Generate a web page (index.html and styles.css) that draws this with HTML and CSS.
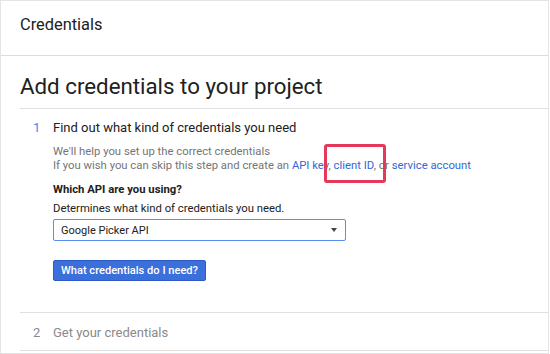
FILE: index.html
```html
<!DOCTYPE html>
<html lang="en">
<head>
    <meta charset="UTF-8">
    <meta name="viewport" content="width=device-width, initial-scale=1.0">
    <title>Credentials</title>
    <link rel="stylesheet" href="styles.css">
</head>
<body>
    <div class="page">
        <header class="topbar">
            <h1>Credentials</h1>
        </header>
        <main class="content">
            <h2 class="title">Add credentials to your project</h2>

            <section class="step step-active">
                <div class="step-num">1</div>
                <div class="step-body">
                    <h3>Find out what kind of credentials you need</h3>
                    <p class="muted">We'll help you set up the correct credentials<br>
                        If you wish you can skip this step and create an <a href="#">API key</a>, <a href="#">client ID</a>, or <a href="#">service account</a></p>
                    <label for="api">Which API are you using?</label>
                    <p class="hint">Determines what kind of credentials you need.</p>
                    <div class="select" id="api">
                        <span>Google Picker API</span>
                        <span class="caret"></span>
                    </div>
                    <button type="button">What credentials do I need?</button>
                </div>
            </section>

            <section class="step step-next">
                <div class="step-num">2</div>
                <div class="step-body">
                    <h3>Get your credentials</h3>
                </div>
            </section>
        </main>
        <span class="highlight"></span>
    </div>
</body>
</html>
```

FILE: styles.css
```css
body {
    margin: 0;
    font-family: Roboto, "Liberation Sans", Arial, sans-serif;
    color: #212121;
    background: #fff;
}
.page {
    position: relative;
    width: 549px;
    height: 354px;
    box-sizing: border-box;
    border: 1px solid #e4e4e4;
    overflow: hidden;
}
.topbar {
    height: 55px;
    box-sizing: border-box;
    padding: 14px 19px 0;
    border-bottom: 1px solid #dcdcdc;
}
.topbar h1 {
    margin: 0;
    font-size: 16.4px;
    line-height: 20px;
    font-weight: 400;
}
.content {
    padding: 16px 0 0 19px;
}
.title {
    margin: 0;
    padding-bottom: 8px;
    font-size: 22.3px;
    line-height: 28px;
    font-weight: 400;
    border-bottom: 1px solid #e0e0e0;
}
.step {
    display: flex;
    padding-left: 13px;
    border-bottom: 1px solid #e0e0e0;
}
.step-num {
    width: 20px;
    font-size: 13px;
    line-height: 20px;
}
.step h3 {
    margin: 0;
    font-size: 13px;
    line-height: 20px;
    font-weight: 400;
}
.step-active {
    padding-top: 9px;
    padding-bottom: 31px;
}
.step-active .step-num {
    color: #4285f4;
}
.step-next {
    padding-top: 10px;
    padding-bottom: 7px;
}
.step-next .step-num,
.step-next h3 {
    color: #8a8a8a;
}
.muted {
    margin: 7px 0 0;
    font-size: 11.3px;
    line-height: 14px;
    color: #757575;
}
.muted a {
    color: #3367d6;
    text-decoration: none;
}
label {
    display: block;
    margin-top: 10px;
    font-size: 11.3px;
    line-height: 14px;
    font-weight: 700;
}
.hint {
    margin: 5px 0 0;
    font-size: 11.3px;
    line-height: 14px;
}
.select {
    display: flex;
    align-items: center;
    justify-content: space-between;
    width: 293px;
    height: 22px;
    margin-top: 3px;
    padding: 0 8px 0 7px;
    box-sizing: border-box;
    border: 1px solid #5a8ef2;
    border-radius: 2px;
    font-size: 11px;
}
.caret {
    width: 0;
    height: 0;
    border-left: 3.5px solid transparent;
    border-right: 3.5px solid transparent;
    border-top: 4px solid #444;
}
button {
    display: block;
    height: 21px;
    margin-top: 19px;
    padding: 0 7px;
    background-color: #3b6fdc;
    border: 1px solid #2c5bc8;
    border-radius: 2px;
    color: #fff;
    font-family: inherit;
    font-size: 11.1px;
    font-weight: 500;
    cursor: pointer;
}
.highlight {
    position: absolute;
    left: 323px;
    top: 143px;
    width: 62px;
    height: 39px;
    box-sizing: border-box;
    border: 3px solid #e5395c;
    border-radius: 3px;
}
```
